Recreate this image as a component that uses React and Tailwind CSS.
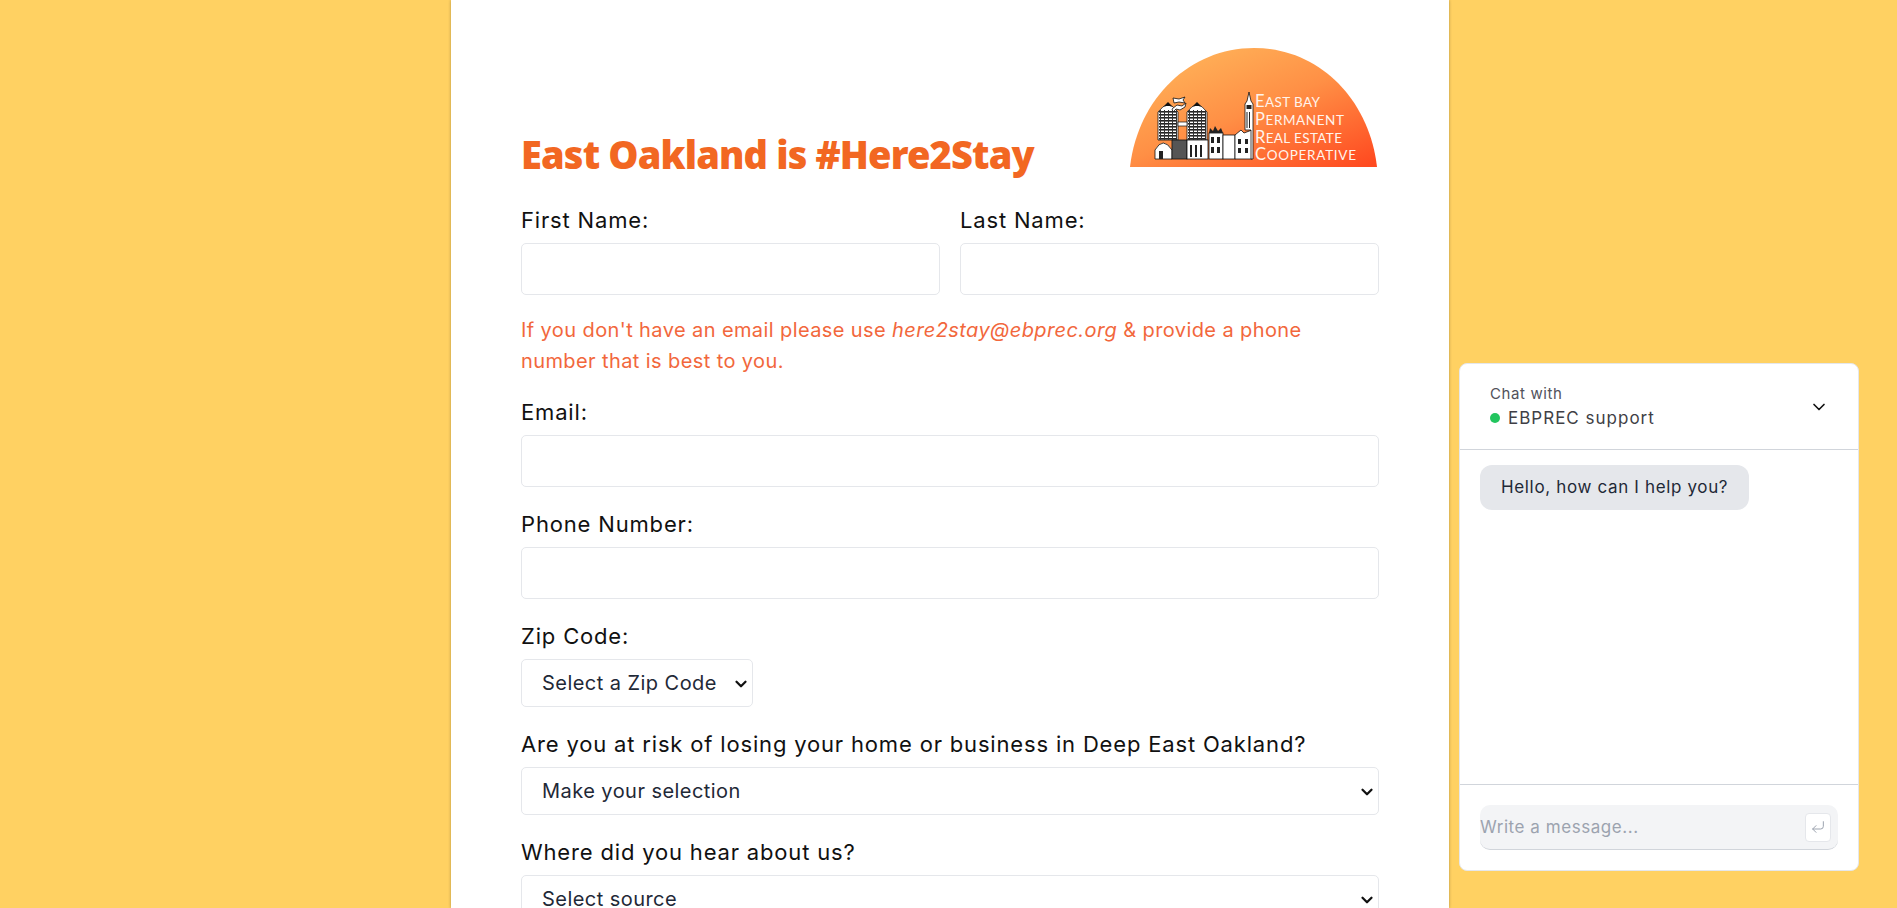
import { ChevronDown, CornerDownLeft } from "lucide-react";

// window stripes for the two towers
const stripes = [63, 66, 69, 72, 75, 78, 81, 84, 87, 90];
const mullions = [2, 6, 10, 14, 18];

const Line = ({ y, first, rest, width }) => {
    return (
        <text x="125" y={y} textLength={width} lengthAdjust="spacing">
            {first}<tspan fontSize="13.5">{rest}</tspan>
        </text>
    );
};

const Tower = ({ x }) => {
    return (
        <g>
            <path d={`M${x} 92 V64 Q${x + 10} 50 ${x + 20} 64 V92 Z`} fill="#fff" stroke="#111" strokeWidth="0.8" />
            {stripes.map((y) => (
                <rect key={y} x={x + 1} y={y} width="18" height="1.6" fill="#222" />
            ))}
            {mullions.map((m) => (
                <rect key={m} x={x + m} y="62" width="1" height="30" fill="#333" />
            ))}
            <path d={`M${x + 6} 58 L${x + 10} 54 L${x + 14} 58 Z`} fill="#111" />
        </g>
    );
};

const Logo = () => {
    return (
        <svg width="249" height="120" viewBox="0 0 249 120">
            <defs>
                <linearGradient id="sun" x1="0.1" y1="0" x2="0.95" y2="1">
                    <stop offset="0" stopColor="#ffb85c" />
                    <stop offset="0.5" stopColor="#ff8f45" />
                    <stop offset="1" stopColor="#ff4a20" />
                </linearGradient>
            </defs>
            <path d="M0 119 C8 50 60 0 124 0 C188 0 239 50 247 119 Z" fill="url(#sun)" />

            {/* skyline */}
            <Tower x={28} />
            <Tower x={57} />
            <rect x="48" y="74" width="9" height="4" fill="#fff" stroke="#111" strokeWidth="0.7" />
            <g stroke="#111" strokeWidth="0.8" fill="#fff">
                <path d="M25 111 V102 Q33 88 42 102 V111 Z" />
                <rect x="42" y="92" width="15" height="19" fill="#555" />
                <rect x="57" y="92" width="21" height="19" />
                <rect x="79" y="85" width="14" height="26" />
                <rect x="93" y="87" width="12" height="24" />
                <path d="M105 111 V87 L111 82 L114 85 L122 82 V111 Z" />
                <path d="M115 82 V56 L117 53 L119 44 L121 53 L123 56 V111 H121 V82 Z" />
                <path d="M42 61 L47 57 L52 58 L56 55 L55 59 L50 62 L46 61 L43 64 Z" />
                <path d="M43 50 L49 51 L55 49 L53 52 L55 55 L49 54 L44 55 Z" />
            </g>
            <path d="M79 85 L80 80 L83 83 L85 78 L88 83 L91 80 L93 85 Z" fill="#222" />
            <g fill="#222">
                <rect x="116.5" y="57" width="5" height="4" />
                <rect x="116.5" y="64" width="1" height="16" />
                <rect x="119" y="64" width="1" height="16" />
                <rect x="81" y="89" width="3" height="6" />
                <rect x="87" y="89" width="3" height="6" />
                <rect x="81" y="99" width="3" height="6" />
                <rect x="87" y="99" width="3" height="6" />
                <rect x="108" y="91" width="3" height="5" />
                <rect x="115" y="91" width="3" height="5" />
                <rect x="108" y="100" width="3" height="5" />
                <rect x="115" y="100" width="3" height="5" />
                <rect x="60" y="97" width="2" height="12" />
                <rect x="65" y="97" width="2" height="12" />
                <rect x="70" y="97" width="2" height="12" />
                <rect x="29" y="103" width="4" height="8" />
            </g>

            {/* name */}
            <g fill="#fff4ec" fontFamily="Lato, sans-serif" fontWeight="400" fontSize="16.5">
                <Line y={59} first="E" rest="AST BAY" width="65" />
                <Line y={77} first="P" rest="ERMANENT" width="89" />
                <Line y={95} first="R" rest="EAL ESTATE" width="87" />
                <Line y={112} first="C" rest="OOPERATIVE" width="101" />
            </g>
        </svg>
    );
};

const Field = ({ label, children, className = "" }) => {
    return (
        <div className={className}>
            <label className="block text-[22px] leading-[30px] tracking-[0.83px] text-[#111]">{label}</label>
            <div className="mt-[8px]">{children}</div>
        </div>
    );
};

const TextBox = () => {
    return <input className="block h-[52px] w-full rounded-[5px] border border-[#e5e7eb] bg-white" />;
};

const Picker = ({ text, className = "w-full" }) => {
    return (
        <div className={"relative " + className}>
            <select className="block h-[48px] w-full appearance-none rounded-[5px] border border-[#e5e7eb] bg-white px-[20px] text-[20px] tracking-[0.45px] text-[#1f2937]">
                <option>{text}</option>
            </select>
            <ChevronDown size={18} strokeWidth={3} className="pointer-events-none absolute top-[16px] right-[3px] text-[#111]" />
        </div>
    );
};

const App = () => {
    return (
        <div className="relative h-screen overflow-hidden bg-[#ffd162] font-[Inter,sans-serif]">
            <div className="ml-[451px] h-full w-[998px] bg-white px-[70px] pt-[48px] shadow-[0_0_3px_rgba(0,0,0,0.3)]">
                <div className="flex items-end justify-between">
                    <h1 className="-mb-[10px] font-['Noto_Sans',sans-serif] text-[38px] leading-[48px] font-black tracking-[-0.85px] text-[#f26722]">
                        East Oakland is #Here2Stay
                    </h1>
                    <Logo />
                </div>

                <div className="mt-[37px] grid grid-cols-2 gap-x-[20px]">
                    <Field label="First Name:"><TextBox /></Field>
                    <Field label="Last Name:"><TextBox /></Field>
                </div>

                <p className="mt-[20px] text-[20px] leading-[31px] tracking-[0.4px] text-[#f2673c]">
                    If you don't have an email please use <em>here2stay@ebprec.org</em> &amp; provide a phone number that is best to you.
                </p>

                <Field label="Email:" className="mt-[20px]"><TextBox /></Field>
                <Field label="Phone Number:" className="mt-[22px]"><TextBox /></Field>
                <Field label="Zip Code:" className="mt-[22px]"><Picker text="Select a Zip Code" className="w-[232px]" /></Field>
                <Field label="Are you at risk of losing your home or business in Deep East Oakland?" className="mt-[22px]"><Picker text="Make your selection" /></Field>
                <Field label="Where did you hear about us?" className="mt-[22px]"><Picker text="Select source" /></Field>
            </div>

            {/* chat widget */}
            <div className="absolute top-[363px] left-[1459px] flex h-[508px] w-[400px] flex-col rounded-[8px] border border-[#e5e7eb] bg-white">
                <div className="flex h-[86px] items-center justify-between border-b border-[#d1d5db] pr-[29px] pl-[30px]">
                    <div>
                        <div className="text-[15px] leading-[20px] tracking-[0.6px] text-[#52525b]">Chat with</div>
                        <div className="mt-[2px] flex items-center gap-[8px] text-[17px] leading-[24px] tracking-[1px] text-[#3f3f46]">
                            <span className="h-[10px] w-[10px] rounded-full bg-[#22c55e]"></span>
                            EBPREC support
                        </div>
                    </div>
                    <ChevronDown size={20} strokeWidth={2} className="text-[#111]" />
                </div>
                <div className="flex-1 px-[20px] pt-[15px]">
                    <div className="inline-block rounded-[12px] bg-[#e5e7eb] px-[21px] py-[10px] text-[17px] leading-[25px] tracking-[0.65px] text-[#1f2937]">
                        Hello, how can I help you?
                    </div>
                </div>
                <div className="border-t border-[#d1d5db] px-[20px] pt-[20px] pb-[20px]">
                    <div className="flex h-[45px] items-center justify-between rounded-[10px] border-b border-[#d1d5db] bg-[#f3f4f6] pr-[7px]">
                        <span className="pt-[2px] text-[17px] tracking-[0.55px] text-[#9ca3af]">Write a message...</span>
                        <span className="flex h-[29px] w-[26px] items-center justify-center rounded-[4px] border border-[#e5e7eb] bg-white">
                            <CornerDownLeft size={16} strokeWidth={1.5} className="text-[#9ca3af]" />
                        </span>
                    </div>
                </div>
            </div>
        </div>
    );
};

export default App;
